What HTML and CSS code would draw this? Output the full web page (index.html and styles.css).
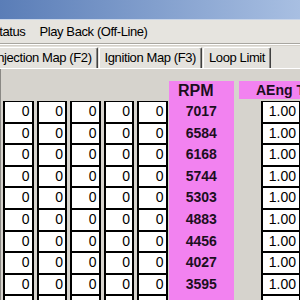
FILE: index.html
```html
<!DOCTYPE html>
<html lang="en">
<head>
  <meta charset="UTF-8">
  <title>Map Editor</title>
  <link rel="stylesheet" href="styles.css">
</head>
<body>
  <div class="window">
    <div class="titlebar"></div>

    <div class="menubar">
      <span class="menu-item">Status</span>
      <span class="menu-item">Play Back (Off-Line)</span>
    </div>

    <div class="tabs">
      <div class="tab">Injection Map (F2)</div>
      <div class="tab">Ignition Map (F3)</div>
      <div class="tab">Loop Limit</div>
    </div>

    <div class="panel">
      <div class="map">
        <div class="cells">
          <div class="cell">0</div><div class="cell">0</div><div class="cell">0</div><div class="cell">0</div><div class="cell">0</div>
          <div class="cell">0</div><div class="cell">0</div><div class="cell">0</div><div class="cell">0</div><div class="cell">0</div>
          <div class="cell">0</div><div class="cell">0</div><div class="cell">0</div><div class="cell">0</div><div class="cell">0</div>
          <div class="cell">0</div><div class="cell">0</div><div class="cell">0</div><div class="cell">0</div><div class="cell">0</div>
          <div class="cell">0</div><div class="cell">0</div><div class="cell">0</div><div class="cell">0</div><div class="cell">0</div>
          <div class="cell">0</div><div class="cell">0</div><div class="cell">0</div><div class="cell">0</div><div class="cell">0</div>
          <div class="cell">0</div><div class="cell">0</div><div class="cell">0</div><div class="cell">0</div><div class="cell">0</div>
          <div class="cell">0</div><div class="cell">0</div><div class="cell">0</div><div class="cell">0</div><div class="cell">0</div>
          <div class="cell">0</div><div class="cell">0</div><div class="cell">0</div><div class="cell">0</div><div class="cell">0</div>
          <div class="cell">0</div><div class="cell">0</div><div class="cell">0</div><div class="cell">0</div><div class="cell">0</div>
        </div>

        <div class="rpm-col">
          <div class="rpm-head">RPM</div>
          <div class="rpm-val">7017</div>
          <div class="rpm-val">6584</div>
          <div class="rpm-val">6168</div>
          <div class="rpm-val">5744</div>
          <div class="rpm-val">5303</div>
          <div class="rpm-val">4883</div>
          <div class="rpm-val">4456</div>
          <div class="rpm-val">4027</div>
          <div class="rpm-val">3595</div>
          <div class="rpm-val"></div>
        </div>

        <div class="aeng-col">
          <div class="aeng-head">AEng Temp</div>
          <div class="aeng-cells">
            <div class="cell">1.00</div>
            <div class="cell">1.00</div>
            <div class="cell">1.00</div>
            <div class="cell">1.00</div>
            <div class="cell">1.00</div>
            <div class="cell">1.00</div>
            <div class="cell">1.00</div>
            <div class="cell">1.00</div>
            <div class="cell">1.00</div>
            <div class="cell"></div>
          </div>
        </div>
      </div>
    </div>
  </div>
</body>
</html>
```

FILE: styles.css
```css
body { margin: 0; width: 300px; height: 300px; overflow: hidden; background: #d4d0c8; font-family: "Liberation Sans", Arial, sans-serif; }
.window { width: 300px; height: 300px; overflow: hidden; }

.titlebar {
  height: 19px;
  background: linear-gradient(to right, #5a7db7, #a8bfe2);
  border-bottom: 1px solid #c9d5e8;
}

/* menu */
.menubar {
  display: flex;
  height: 23px;
  align-items: center;
  margin-left: -16px;
  background: #e6e4df;
  font-size: 13px;
  letter-spacing: -0.4px;
  color: #000;
  border-bottom: 1px solid #a8a6a0;
  box-shadow: 0 1px 0 #fff;
}
.menu-item { padding: 0 7px; white-space: nowrap; }

/* tabs */
.tabs {
  display: flex;
  height: 22px;
  margin-top: 2px;
  margin-left: -12px;
  align-items: flex-end;
  background: #e4e2dd;
  border-bottom: 1px solid #fff;
}
.tab {
  flex-shrink: 0;
  height: 20px;
  line-height: 19px;
  padding: 0 5px;
  margin-right: 1px;
  font-size: 13px;
  letter-spacing: -0.4px;
  white-space: nowrap;
  border-top: 1px solid #fff;
  border-left: 1px solid #fff;
  border-right: 1px solid #404040;
  border-radius: 2px 2px 0 0;
  box-shadow: inset -1px 0 0 #8a8884;
}

/* grid */
.panel {
  height: 240px;
  padding-top: 12px;
  border-left: 1px solid #8a8884;
  background: #d6d3cd;
}
.map { display: flex; align-items: flex-start; padding-left: 2px; }
.map > div { flex-shrink: 0; }

.cells {
  display: grid;
  grid-template-columns: repeat(5, 30.5px);
  grid-auto-rows: 21.6px;
  column-gap: 3px;
  margin-top: 20px;
}
.cell {
  box-sizing: border-box;
  background: #fff;
  border-style: solid;
  border-color: #000;
  border-width: 1px 2px;
  text-align: right;
  padding-right: 2px;
  font-size: 14px;
  line-height: 19px;
  color: #000;
}

.rpm-col {
  width: 65.5px;
  margin-left: 1px;
  background: #f282f0;
  color: #1c0f1e;
  font-weight: bold;
  text-align: center;
}
.rpm-head { height: 20px; line-height: 19px; font-size: 16px; padding-right: 11px; }
.rpm-val { height: 21.6px; line-height: 21.6px; font-size: 14px; }

.aeng-col { margin-left: 5px; width: 70px; }
.aeng-head {
  height: 18px;
  line-height: 18px;
  padding-left: 17px;
  background: #f282f0;
  color: #1c0f1e;
  font-size: 14px;
  font-weight: bold;
  white-space: nowrap;
  overflow: hidden;
}
.aeng-cells {
  display: grid;
  grid-auto-rows: 21.6px;
  width: 40px;
  margin-top: 2px;
  margin-left: 22px;
}
.aeng-cells .cell { padding-right: 3px; }
```
